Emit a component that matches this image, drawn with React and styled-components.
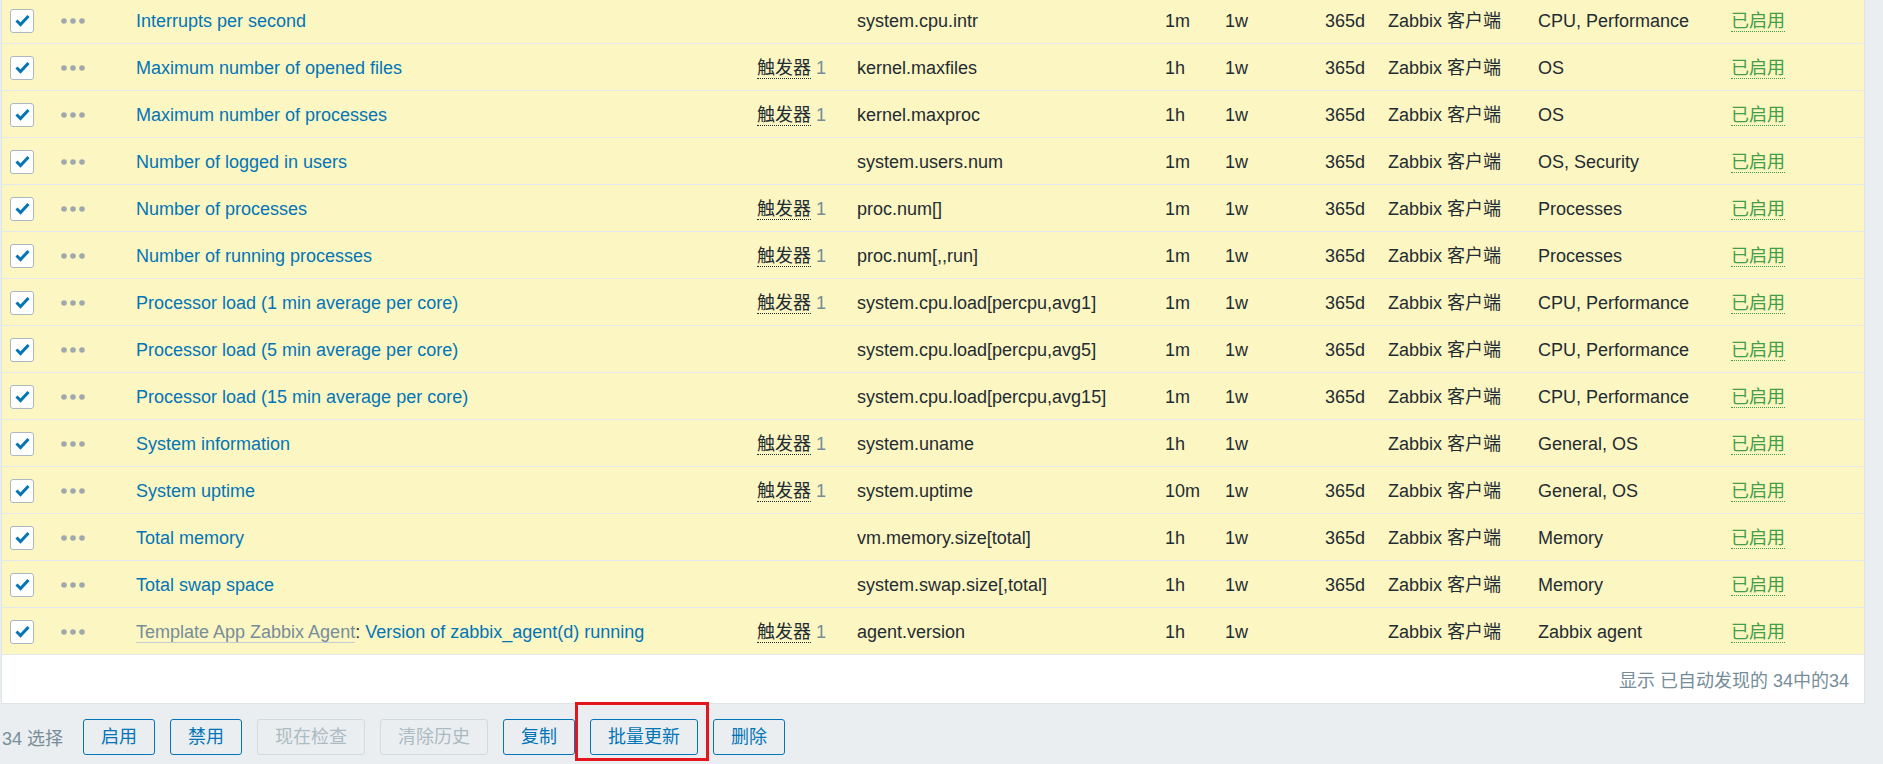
import React from "react";
import styled, { createGlobalStyle } from "styled-components";

const items = [
  { name: "Interrupts per second", triggers: 0, key: "system.cpu.intr", delay: "1m", history: "1w", trends: "365d", apps: "CPU, Performance" },
  { name: "Maximum number of opened files", triggers: 1, key: "kernel.maxfiles", delay: "1h", history: "1w", trends: "365d", apps: "OS" },
  { name: "Maximum number of processes", triggers: 1, key: "kernel.maxproc", delay: "1h", history: "1w", trends: "365d", apps: "OS" },
  { name: "Number of logged in users", triggers: 0, key: "system.users.num", delay: "1m", history: "1w", trends: "365d", apps: "OS, Security" },
  { name: "Number of processes", triggers: 1, key: "proc.num[]", delay: "1m", history: "1w", trends: "365d", apps: "Processes" },
  { name: "Number of running processes", triggers: 1, key: "proc.num[,,run]", delay: "1m", history: "1w", trends: "365d", apps: "Processes" },
  { name: "Processor load (1 min average per core)", triggers: 1, key: "system.cpu.load[percpu,avg1]", delay: "1m", history: "1w", trends: "365d", apps: "CPU, Performance" },
  { name: "Processor load (5 min average per core)", triggers: 0, key: "system.cpu.load[percpu,avg5]", delay: "1m", history: "1w", trends: "365d", apps: "CPU, Performance" },
  { name: "Processor load (15 min average per core)", triggers: 0, key: "system.cpu.load[percpu,avg15]", delay: "1m", history: "1w", trends: "365d", apps: "CPU, Performance" },
  { name: "System information", triggers: 1, key: "system.uname", delay: "1h", history: "1w", trends: "", apps: "General, OS" },
  { name: "System uptime", triggers: 1, key: "system.uptime", delay: "10m", history: "1w", trends: "365d", apps: "General, OS" },
  { name: "Total memory", triggers: 0, key: "vm.memory.size[total]", delay: "1h", history: "1w", trends: "365d", apps: "Memory" },
  { name: "Total swap space", triggers: 0, key: "system.swap.size[,total]", delay: "1h", history: "1w", trends: "365d", apps: "Memory" },
  { template: "Template App Zabbix Agent", name: "Version of zabbix_agent(d) running", triggers: 1, key: "agent.version", delay: "1h", history: "1w", trends: "", apps: "Zabbix agent" },
];

const actions = [
  { label: "启用" },
  { label: "禁用" },
  { label: "现在检查", disabled: true },
  { label: "清除历史", disabled: true },
  { label: "复制" },
  { label: "批量更新", highlighted: true },
  { label: "删除" },
];

const GlobalStyle = createGlobalStyle`
  html, body {
    margin: 0;
    padding: 0;
    background: #ebeef0;
    overflow: hidden;
  }
  body {
    font-family: "Liberation Sans", Arial, "Noto Sans CJK SC", sans-serif;
    font-size: 18px;
    color: #1f2c33;
  }
`;

const Checkbox = () => (
  <CheckBox>
    <svg width="23" height="23" viewBox="0 0 23 23">
      <path d="M5.5 11.5 L9.5 15.5 L17.5 7" fill="none" stroke="#0275b8" strokeWidth="3" />
    </svg>
  </CheckBox>
);

const Dots = () => (
  <DotsIcon width="24" height="6" viewBox="0 0 24 6">
    <circle cx="3" cy="3" r="2.8" fill="#a0a8ac" />
    <circle cx="12" cy="3" r="2.8" fill="#a0a8ac" />
    <circle cx="21" cy="3" r="2.8" fill="#a0a8ac" />
  </DotsIcon>
);

const App = () => {
  return (
    <Page>
      <GlobalStyle />
      <Panel>
        <Table>
          <colgroup>
            <col style={{ width: 59 }} />
            <col style={{ width: 75 }} />
            <col style={{ width: 621 }} />
            <col style={{ width: 100 }} />
            <col style={{ width: 308 }} />
            <col style={{ width: 60 }} />
            <col style={{ width: 100 }} />
            <col style={{ width: 63 }} />
            <col style={{ width: 150 }} />
            <col style={{ width: 193 }} />
            <col />
          </colgroup>
          <tbody>
            {items.map((item) => (
              <Row key={item.key}>
                <CheckCell>
                  <Checkbox />
                </CheckCell>
                <Cell>
                  <Dots />
                </Cell>
                <Cell>
                  {item.template && (
                    <>
                      <TemplateLink>{item.template}</TemplateLink>:{" "}
                    </>
                  )}
                  <NameLink>{item.name}</NameLink>
                </Cell>
                <Cell>
                  {item.triggers > 0 && (
                    <>
                      <TriggerLink>触发器</TriggerLink> <Count>{item.triggers}</Count>
                    </>
                  )}
                </Cell>
                <Cell>{item.key}</Cell>
                <Cell>{item.delay}</Cell>
                <Cell>{item.history}</Cell>
                <Cell>{item.trends}</Cell>
                <Cell>Zabbix 客户端</Cell>
                <Cell>{item.apps}</Cell>
                <Cell>
                  <Status>已启用</Status>
                </Cell>
              </Row>
            ))}
          </tbody>
        </Table>
        <TableFooter>显示 已自动发现的 34中的34</TableFooter>
      </Panel>
      <ActionBar>
        <SelectedCount>34 选择</SelectedCount>
        {actions.map((action) => (
          <ButtonSlot key={action.label}>
            <ActionButton disabled={action.disabled}>{action.label}</ActionButton>
            {action.highlighted && <Highlight />}
          </ButtonSlot>
        ))}
      </ActionBar>
    </Page>
  );
};

export default App;

const Page = styled.div`
  width: 1883px;
  height: 764px;
  overflow: hidden;
`;

const Panel = styled.div`
  margin: -3px 18px 0 1px;
  background: #ffffff;
  border-left: 1px solid #dfe4e7;
  border-right: 1px solid #dfe4e7;
  border-bottom: 1px solid #dfe4e7;
`;

const Table = styled.table`
  width: 100%;
  border-collapse: collapse;
  table-layout: fixed;
`;

const Row = styled.tr`
  background: #fcf6c2;
`;

const Cell = styled.td`
  height: 45px;
  padding: 1px 0 0 0;
  border-bottom: 1px solid #e4e9ee;
  vertical-align: middle;
  white-space: nowrap;
  overflow: hidden;
  line-height: 20px;
`;

const CheckCell = styled(Cell)`
  padding-left: 8px;
`;

const CheckBox = styled.span`
  display: flex;
  width: 24px;
  height: 24px;
  box-sizing: border-box;
  border: 1px solid #acb8be;
  border-radius: 3px;
  background: #ffffff;
  align-items: center;
  justify-content: center;

  svg {
    flex: none;
  }
`;

const DotsIcon = styled.svg`
  display: block;
  margin-top: 1px;
`;

const NameLink = styled.span`
  color: #0275b8;
`;

const TemplateLink = styled.span`
  color: #768d99;
  border-bottom: 1px solid #c3ccd1;
`;

const TriggerLink = styled.span`
  color: #1f2c33;
  border-bottom: 1px dotted #1f2c33;
`;

const Count = styled.span`
  color: #768d99;
`;

const Status = styled.span`
  color: #429e47;
  border-bottom: 1px dotted #429e47;
`;

const TableFooter = styled.div`
  height: 48px;
  display: flex;
  align-items: center;
  justify-content: flex-end;
  padding-right: 15px;
  color: #768d99;
`;

const ActionBar = styled.div`
  display: flex;
  align-items: center;
  gap: 15px;
  padding: 15px 0 0 2px;
`;

const SelectedCount = styled.span`
  color: #768d99;
  margin-right: 5px;
`;

const ButtonSlot = styled.div`
  position: relative;
  display: flex;
`;

const ActionButton = styled.button`
  height: 36px;
  padding: 0 17px;
  border: 1px solid ${(props) => (props.disabled ? "#d3dade" : "#0275b8")};
  border-radius: 3px;
  background: transparent;
  color: ${(props) => (props.disabled ? "#acbbc2" : "#0275b8")};
  font-family: inherit;
  font-size: 18px;
  line-height: 34px;
  cursor: ${(props) => (props.disabled ? "default" : "pointer")};
`;

const Highlight = styled.div`
  position: absolute;
  left: -15px;
  right: -11px;
  top: -17px;
  bottom: -6px;
  border: 3px solid #e3161d;
  pointer-events: none;
`;
